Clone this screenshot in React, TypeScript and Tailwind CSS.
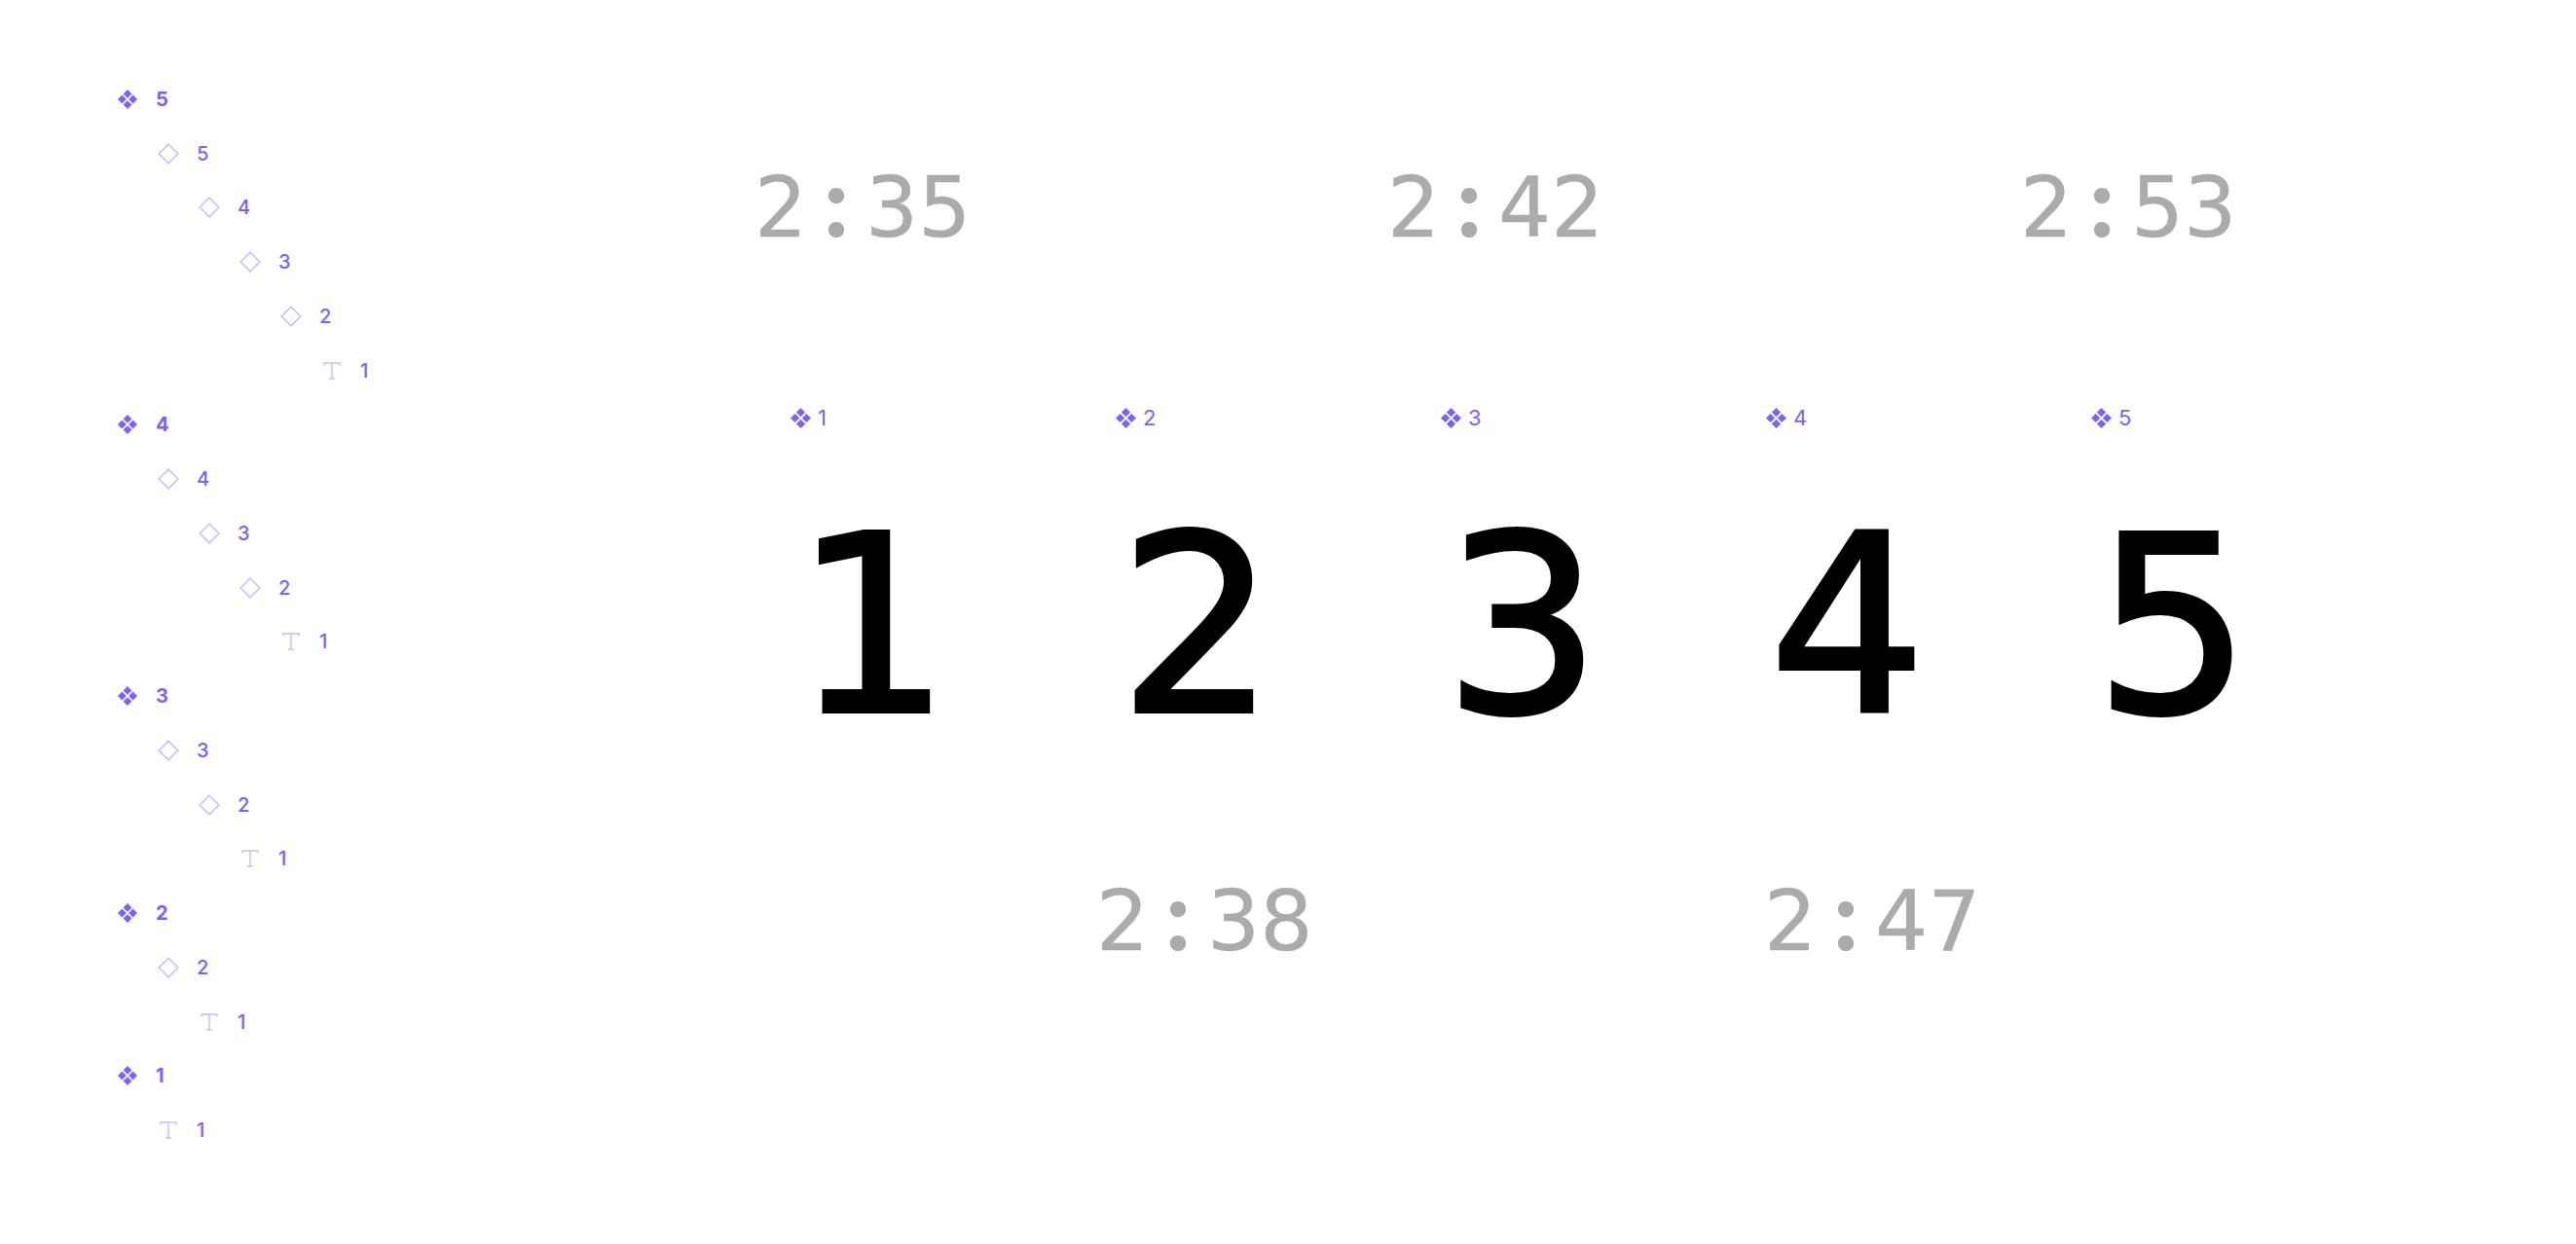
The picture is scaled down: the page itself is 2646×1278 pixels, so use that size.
import React from "react";

const P = "#7B61FF";

function Comp({ size = 20 }: { size?: number }) {
  return (
    <svg width={size} height={size} viewBox="0 0 20 20" fill={P} className="shrink-0">
      <path d="M10 0 L14.4 4.4 L10 8.8 L5.6 4.4Z" />
      <path d="M10 11.2 L14.4 15.6 L10 20 L5.6 15.6Z" />
      <path d="M4.4 5.6 L8.8 10 L4.4 14.4 L0 10Z" />
      <path d="M15.6 5.6 L20 10 L15.6 14.4 L11.2 10Z" />
    </svg>
  );
}

function Inst() {
  return (
    <svg width="22" height="22" viewBox="0 0 22 22" fill="none" stroke={P} strokeOpacity="0.42" strokeWidth="1.6" className="shrink-0">
      <path d="M11 1.2 L20.8 11 L11 20.8 L1.2 11Z" />
    </svg>
  );
}

function TextIcon() {
  return (
    <svg width="18" height="18" viewBox="0 0 18 18" fill="none" stroke={P} strokeOpacity="0.42" strokeWidth="1.4" className="shrink-0">
      <path d="M1 3.5 V1 H17 V3.5 M9 1 V17 M6 17 H12" />
    </svg>
  );
}

type Row = { d: number; k: "c" | "i" | "t"; n: number };
const rows: Row[] = [];
for (let top = 5; top >= 1; top--) {
  rows.push({ d: 0, k: "c", n: top });
  for (let n = top; n >= 1; n--) {
    rows.push({ d: top - n + 1, k: n === 1 ? "t" : "i", n });
  }
}

const indent: Record<number, string> = {
  0: "ml-0",
  1: "ml-[42px]",
  2: "ml-[84px]",
  3: "ml-[126px]",
  4: "ml-[168px]",
  5: "ml-[210px]",
};

function TreeRow({ r }: { r: Row }) {
  return (
    <div className={`flex h-[55.75px] items-center ${indent[r.d]}`}>
      <div className="flex w-[39px] shrink-0 items-center">
        <div className="flex w-[20px] justify-center">
          {r.k === "c" ? <Comp /> : r.k === "i" ? <Inst /> : <TextIcon />}
        </div>
      </div>
      <span className={`text-[20px] leading-none text-[#7B61FF] ${r.k === "c" ? "font-bold" : "font-medium"}`}>{r.n}</span>
    </div>
  );
}

function Time({ t, w }: { t: string; w: string }) {
  const [a, b] = t.split(":");
  return (
    <span className={`flex h-[85px] ${w} items-baseline text-[85px] leading-none text-[#ABABAB] [-webkit-text-stroke:0.5px_#ABABAB]`}>
      <span>{a}</span>
      <span className="h-[85px] w-[60px] text-center font-['Inter',sans-serif] text-[96px] font-bold [-webkit-text-stroke:0]">:</span>
      <span>{b}</span>
    </span>
  );
}

export default function App() {
  return (
    <div className="flex h-[1278px] w-[2646px] overflow-hidden bg-white font-['Inter',sans-serif]">
      <div className="w-[810px] shrink-0 pl-[121px] pt-[74px]">
        {rows.map((r, i) => (
          <TreeRow key={i} r={r} />
        ))}
      </div>
      <div className="flex flex-1 flex-col font-['DejaVu_Sans',sans-serif]">
        <div className="mt-[160px] -ml-[35px] flex">
          {["2:35", "2:42", "2:53"].map((t) => (
            <Time key={t} t={t} w="w-[650px]" />
          ))}
        </div>
        <div className="mt-[173px] ml-[2px] flex font-['Inter',sans-serif]">
          {[1, 2, 3, 4, 5].map((n) => (
            <div key={n} className="flex w-[334px] items-center gap-[7px]">
              <Comp size={21} />
              <span className="text-[22px] leading-none text-[#7B61FF]">{n}</span>
            </div>
          ))}
        </div>
        <div className="mt-[76px] ml-[5px] flex">
          {[1, 2, 3, 4, 5].map((n) => (
            <div key={n} className="w-[334px] text-[254px] leading-none text-black [-webkit-text-stroke:4px_#000]">
              {n}
            </div>
          ))}
        </div>
        <div className="mt-[123px] ml-[316px] flex">
          {["2:38", "2:47"].map((t) => (
            <Time key={t} t={t} w="w-[686px]" />
          ))}
        </div>
      </div>
    </div>
  );
}
